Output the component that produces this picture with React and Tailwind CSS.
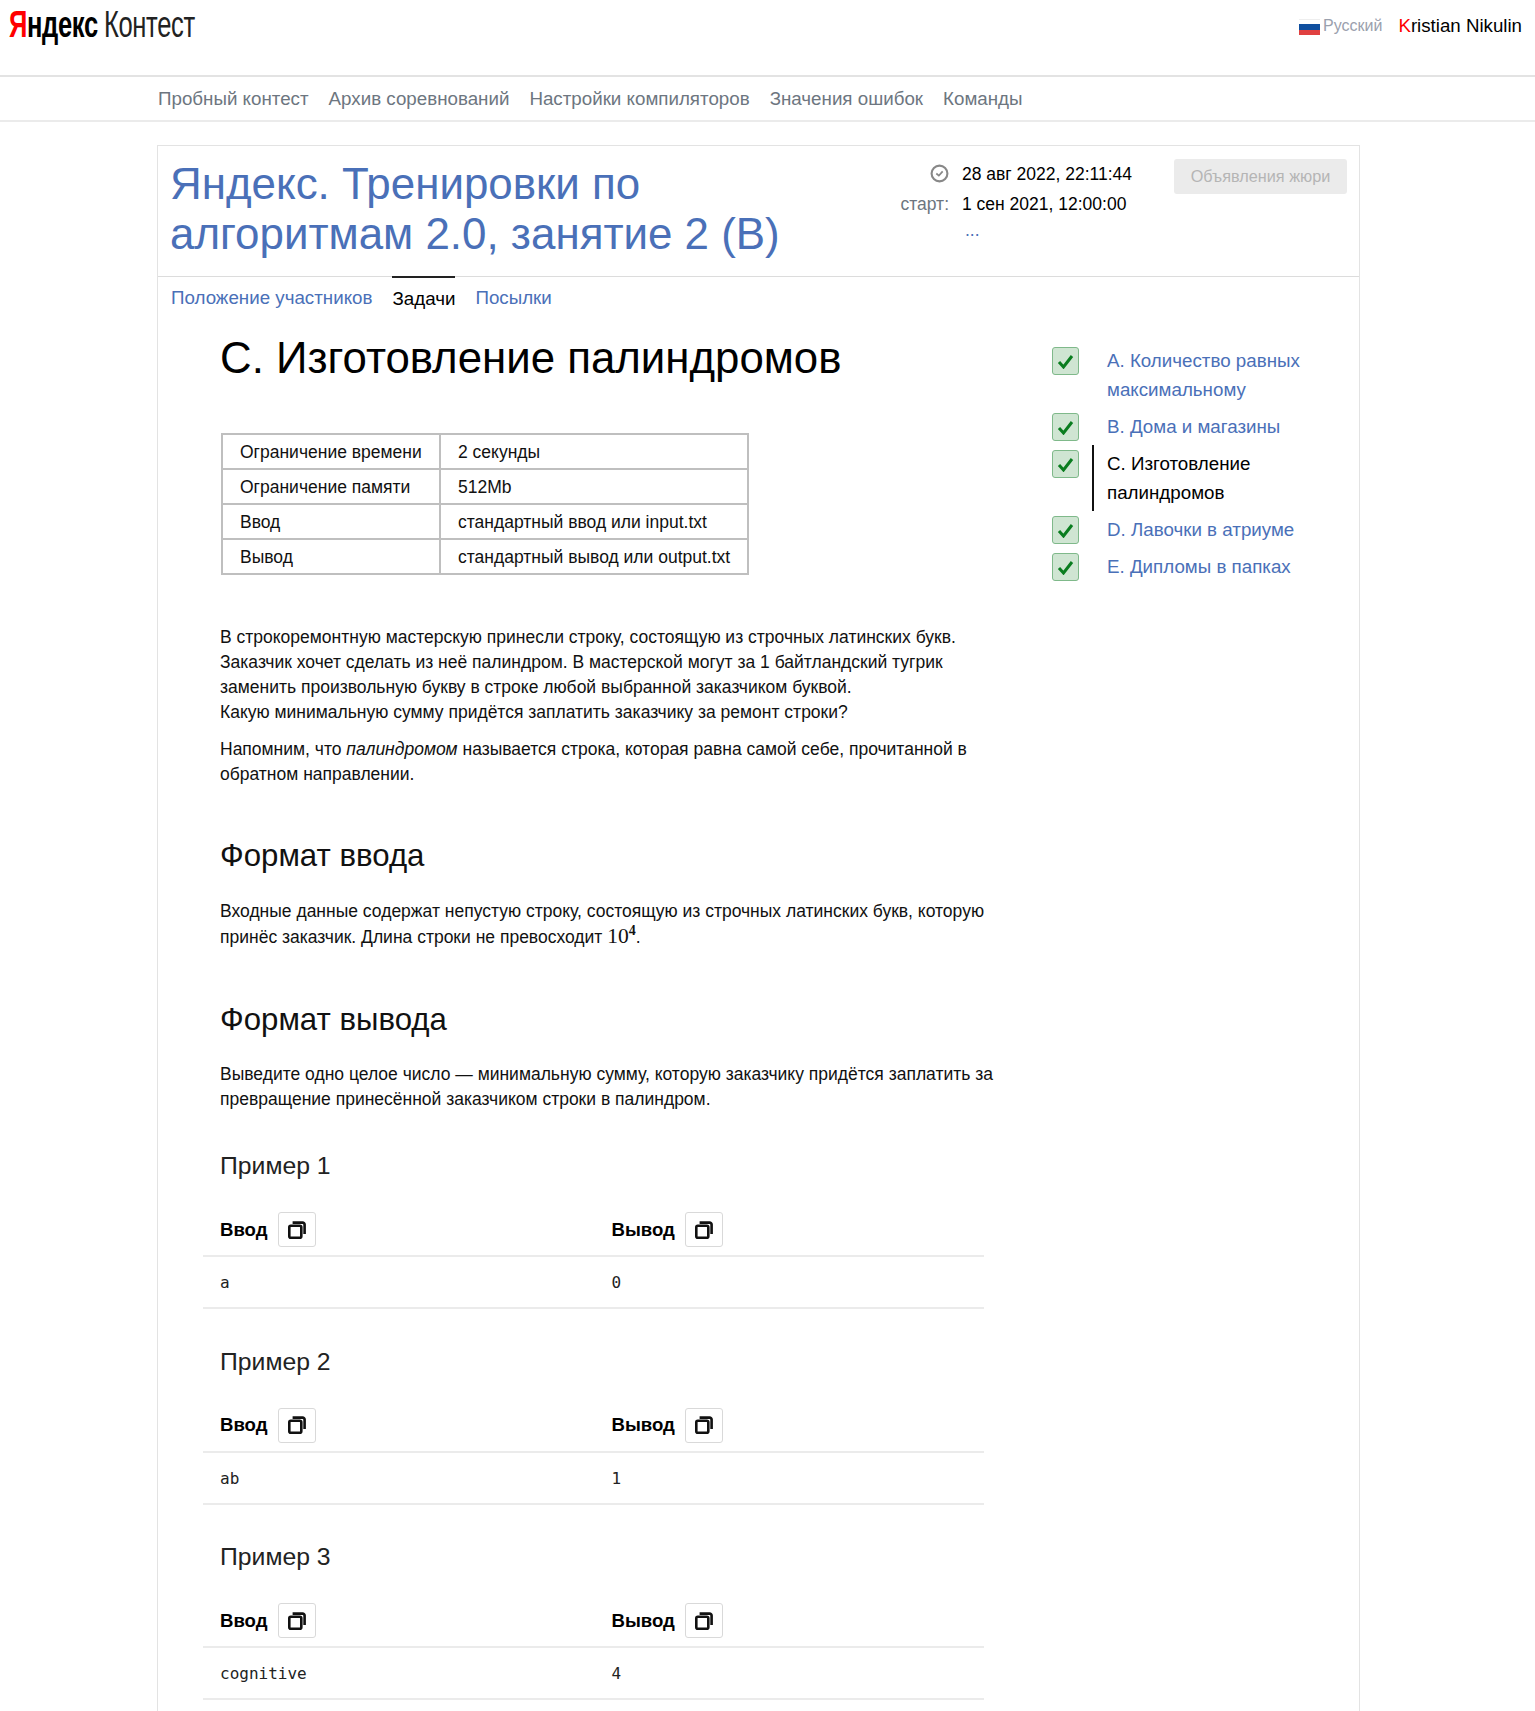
const LINK = 'text-[#4a70b8]';

const tasks = [
  { title: 'A. Количество равных максимальному' },
  { title: 'B. Дома и магазины' },
  { title: 'C. Изготовление палиндромов', active: true },
  { title: 'D. Лавочки в атриуме' },
  { title: 'E. Дипломы в папках' },
];

const limits = [
  ['Ограничение времени', '2 секунды'],
  ['Ограничение памяти', '512Mb'],
  ['Ввод', 'стандартный ввод или input.txt'],
  ['Вывод', 'стандартный вывод или output.txt'],
];

const samples = [
  { name: 'Пример 1', input: 'a', output: '0' },
  { name: 'Пример 2', input: 'ab', output: '1' },
  { name: 'Пример 3', input: 'cognitive', output: '4' },
];

function CopyButton() {
  return (
    <span className="w-[38px] h-[35px] ml-[10px] flex items-center justify-center rounded-[3px] border border-[#d9d9d9] bg-white">
      <svg width="18" height="18" viewBox="0 0 18 18" fill="none" stroke="#111" strokeWidth="2.6">
        <rect x="1.3" y="4.8" width="12" height="11.9" rx="1.5" />
        <path d="M4.6 1.6h10a2 2 0 0 1 2 2v9.4" />
      </svg>
    </span>
  );
}

function Check() {
  return (
    <span className="w-[27px] h-[28px] shrink-0 flex items-center justify-center rounded-[3px] border border-[#7fb98a] bg-[#cfe5d2]">
      <svg width="17" height="15" viewBox="0 0 17 15" fill="none" stroke="#0a7d1f" strokeWidth="3">
        <path d="M2 8l4.5 5L15 2" />
      </svg>
    </span>
  );
}

function Sample({ name, input, output }) {
  return (
    <div className="mb-[37.5px]">
      <h3 className="pl-[17px] text-[24.75px] leading-[30px] text-[#222]">{name}</h3>
      <div className="mt-[31px] w-[781px]">
        <div className="grid grid-cols-2 h-[45px] pb-[10px] border-b-2 border-[#ebebeb]">
          <div className="pl-[17px] flex items-center font-bold text-[18.6px]">Ввод<CopyButton /></div>
          <div className="pl-[18px] flex items-center font-bold text-[18.6px]">Вывод<CopyButton /></div>
        </div>
        <div className="grid grid-cols-2 h-[52px] pt-[2px] items-center border-b-2 border-[#ebebeb] font-['DejaVu_Sans_Mono',monospace] text-[16px] text-[#222]">
          <div className="pl-[17px]">{input}</div>
          <div className="pl-[18px]">{output}</div>
        </div>
      </div>
    </div>
  );
}

export default function App() {
  return (
    <div className="h-[1711px] overflow-hidden bg-white text-black font-['Liberation_Sans',Arial,sans-serif]">
      <header className="h-[77px] border-b-2 border-[#e3e3e3] flex justify-between pl-[9px] pr-[13px]">
        <div className="pt-[3px] text-[37px] leading-[44px] whitespace-nowrap font-['Liberation_Sans_Narrow','Liberation_Sans',sans-serif] origin-left scale-x-[0.69] tracking-[-0.5px]">
          <span className="font-bold"><span className="text-[#f00]">Я</span>ндекс</span>
          <span className="ml-[9px] text-[#222]">Контест</span>
        </div>
        <div className="flex items-start pt-[14px] text-[18.7px] leading-[24px]">
          <span className="mt-[5px] w-[21px] h-[16px] flex flex-col">
            <span className="h-[5px] bg-white border-t border-[#eee]" />
            <span className="h-[6px] bg-[#0f4f9f]" />
            <span className="h-[5px] bg-[#e04040]" />
          </span>
          <span className="ml-[3px] text-[16px] text-[#9aa0ad]">Русский</span>
          <span className="ml-[16px]"><span className="text-[#f00]">K</span>ristian Nikulin</span>
        </div>
      </header>

      <nav className="h-[45px] pt-[2px] border-b-2 border-[#ebebeb] pl-[158px] flex items-center gap-[20px] text-[18.75px] text-[#6d7680]">
        <span>Пробный контест</span>
        <span>Архив соревнований</span>
        <span>Настройки компиляторов</span>
        <span>Значения ошибок</span>
        <span>Команды</span>
      </nav>

      <main className="mt-[23px] ml-[157px] w-[1203px] h-[1600px] border border-[#e3e3e3] border-b-0">
        <div className="h-[131px] border-b border-[#dcdcdc] flex pl-[12px] pr-[12px]">
          <h1 className={`w-[650px] shrink-0 pt-[13px] text-[43.9px] leading-[50px] ${LINK}`}>
            Яндекс. Тренировки по алгоритмам 2.0, занятие 2 (B)
          </h1>
          <div className="w-[300px] ml-[68px] pt-[14px] text-[17.5px] leading-[29px]">
            <div className="flex items-center">
              <span className="w-[61px] flex justify-end -mt-[2px]">
                <svg width="19" height="19" viewBox="0 0 18 18" fill="none" stroke="#888" strokeWidth="2">
                  <circle cx="9" cy="9" r="7.5" />
                  <path d="M6 9l2.4 2L12 7" strokeWidth="1.6" />
                </svg>
              </span>
              <span className="ml-[13px]">28 авг 2022, 22:11:44</span>
            </div>
            <div className="flex mt-[1px]">
              <span className="text-[#6d7680] w-[61px] text-right">старт:</span>
              <span className="ml-[13px]">1 сен 2021, 12:00:00</span>
            </div>
            <div className={`pl-[77px] leading-[22px] ${LINK}`}>...</div>
          </div>
          <div className="ml-auto shrink-0 mt-[13px] w-[173px] h-[35px] rounded-[3px] bg-[#ebebeb] text-[#b5b5b5] text-[16.25px] flex items-center justify-center">
            Объявления жюри
          </div>
        </div>

        <div className="h-[40px] pl-[13px] flex gap-[20px] text-[18.75px] leading-[42px]">
          <span className={LINK}>Положение участников</span>
          <span className="border-t-2 border-[#222] -mt-px leading-[41px]">Задачи</span>
          <span className={LINK}>Посылки</span>
        </div>

        <div className="flex">
          <div className="w-[894px] shrink-0 pl-[45px]">
            <div className="pl-[17px]">
              <h2 className="mt-[11px] text-[43.8px] leading-[60px]">C. Изготовление палиндромов</h2>
              <div className="mt-[45px] ml-px w-[528px] border-2 border-[#bfbfbf] text-[17.5px] text-[#111]">
                {limits.map(([k, v], i) => (
                  <div key={k} className={`flex items-center ${i > 0 ? 'border-t-2 border-[#bfbfbf] h-[35px]' : 'h-[33px]'}`}>
                    <div className="w-[218px] h-full pl-[17px] pt-[1px] flex items-center border-r-2 border-[#bfbfbf]">{k}</div>
                    <div className="pl-[17px] pt-[1px]">{v}</div>
                  </div>
                ))}
              </div>

              <div className="mt-[50px] w-[790px] text-[17.5px] leading-[25px] text-[#111]">
                <p>В строкоремонтную мастерскую принесли строку, состоящую из строчных латинских букв.<br />
                  Заказчик хочет сделать из неё палиндром. В мастерской могут за 1 байтландский тугрик<br />
                  заменить произвольную букву в строке любой выбранной заказчиком буквой.<br />
                  Какую минимальную сумму придётся заплатить заказчику за ремонт строки?</p>
                <p className="mt-[12px]">Напомним, что <i>палиндромом</i> называется строка, которая равна самой себе, прочитанной в обратном направлении.</p>

                <h3 className="mt-[49px] text-[31.2px] leading-[40px]">Формат ввода</h3>
                <p className="mt-[23px]">Входные данные содержат непустую строку, состоящую из строчных латинских букв, которую принёс заказчик. Длина строки не превосходит <span className="font-['Liberation_Serif',serif] text-[21.5px]">10<span className="relative -top-[8px] text-[14px] font-bold">4</span></span>.</p>

                <h3 className="mt-[49px] text-[31.2px] leading-[40px]">Формат вывода</h3>
                <p className="mt-[22px]">Выведите одно целое число — минимальную сумму, которую заказчику придётся заплатить за превращение принесённой заказчиком строки в палиндром.</p>
              </div>
            </div>

            <div className="mt-[39px]">
              {samples.map((s) => <Sample key={s.name} {...s} />)}
            </div>
          </div>

          <ul className="-mt-[2px] pt-[27px] text-[18.75px] leading-[29px]">
            {tasks.map((t) => (
              <li key={t.title} className="flex">
                <span className="pt-[5px]"><Check /></span>
                <span className={`ml-[13px] pl-[13px] py-[4px] w-[220px] border-l-2 ${t.active ? 'border-[#111] text-black' : `border-transparent ${LINK}`}`}>
                  {t.title}
                </span>
              </li>
            ))}
          </ul>
        </div>
      </main>
    </div>
  );
}
